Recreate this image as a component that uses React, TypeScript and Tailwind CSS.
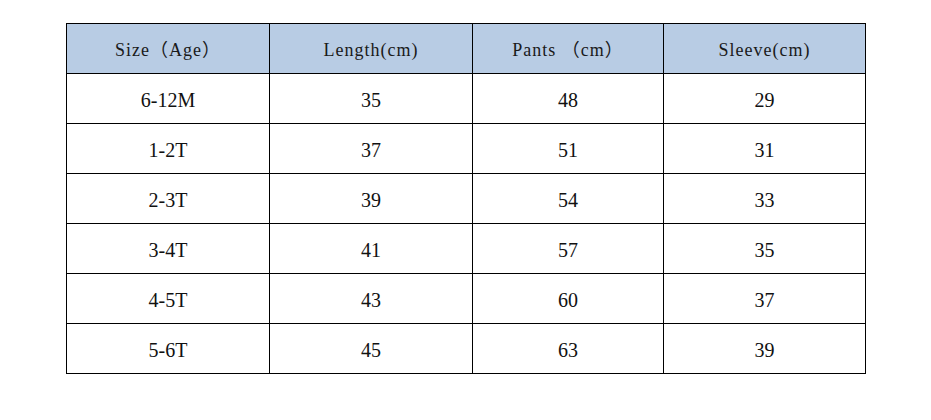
const headers = ["Size（Age）", "Length(cm)", "Pants （cm）", "Sleeve(cm)"];

const rows = [
  ["6-12M", "35", "48", "29"],
  ["1-2T", "37", "51", "31"],
  ["2-3T", "39", "54", "33"],
  ["3-4T", "41", "57", "35"],
  ["4-5T", "43", "60", "37"],
  ["5-6T", "45", "63", "39"],
];

export default function App() {
  return (
    <div className="w-[931px] h-[420px] bg-white pt-[23px] pl-[66px]">
      <div className="grid grid-cols-[203px_203px_191px_202px] w-[800px] border-l border-t border-black">
        {headers.map((h) => (
          <div
            key={h}
            className="h-[50px] bg-[#b8cce4] border-r border-b border-black flex items-center justify-center pt-[4px] text-[18px] tracking-[1px] text-[#1a1a1a] whitespace-pre"
            style={{ fontFamily: '"Liberation Serif", "Noto Sans CJK SC", serif' }}
          >
            {h}
          </div>
        ))}
        {rows.map((r, i) =>
          r.map((c, j) => (
            <div
              key={i + "-" + j}
              className="h-[50px] border-r border-b border-black flex items-center justify-center pt-[3px] text-[20px] text-[#111]"
              style={{ fontFamily: '"Liberation Serif", serif' }}
            >
              {c}
            </div>
          ))
        )}
      </div>
    </div>
  );
}
